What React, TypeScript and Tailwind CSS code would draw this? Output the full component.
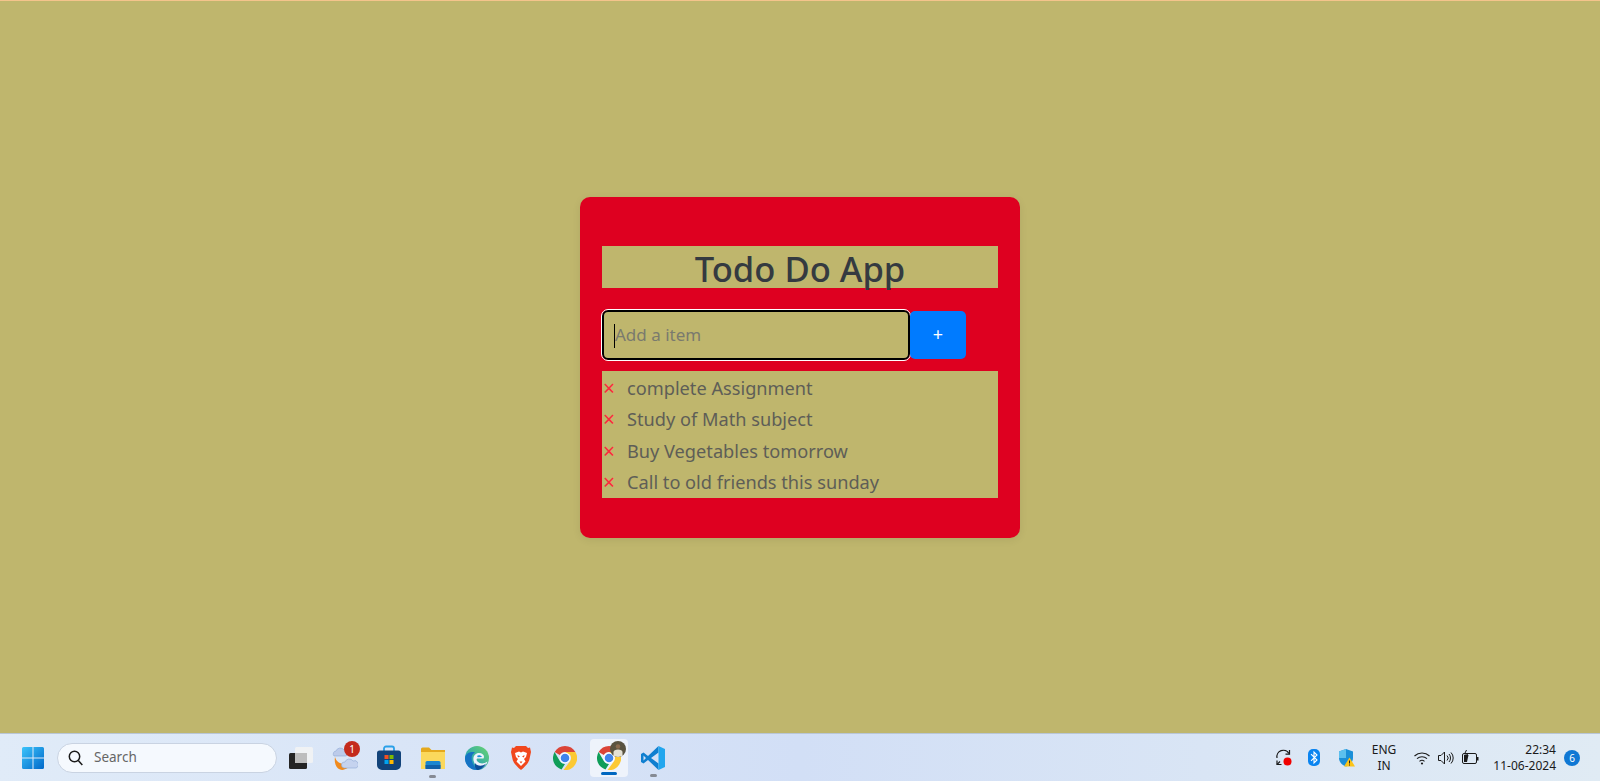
const todos = [
  "complete Assignment",
  "Study of Math subject",
  "Buy Vegetables tomorrow",
  "Call to old friends this sunday",
];

function WindowsLogo() {
  return (
    <svg width="24" height="24" viewBox="0 0 24 24">
      <defs>
        <linearGradient id="win" x1="0" y1="0" x2="1" y2="1">
          <stop offset="0" stopColor="#3cc4fb" />
          <stop offset="1" stopColor="#0068c9" />
        </linearGradient>
      </defs>
      <path fill="url(#win)" d="M1 2.500A1.500 1.500 0 0 1 2.500 1H11.500V11.500H1ZM12.500 1H21.500A1.500 1.500 0 0 1 23 2.500V11.500H12.500ZM1 12.500H11.500V23H2.500A1.500 1.500 0 0 1 1 21.500ZM12.500 12.500H23V21.500A1.500 1.500 0 0 1 21.500 23H12.500Z" />
    </svg>
  );
}

function TaskView() {
  return (
    <svg width="24" height="24" viewBox="0 0 24 24">
      <rect x="0" y="7" width="18" height="16" rx="1.500" fill="#242424" />
      <rect x="6" y="1" width="18" height="16" rx="1.500" fill="#f3f3f3" fillOpacity="0.85" />
      <rect x="6" y="7" width="12" height="10" fill="#bdbdbd" />
    </svg>
  );
}

function Widget() {
  return (
    <svg width="26" height="28" viewBox="0 0 26 28">
      <path d="M3 13C5 20 12 22 20 17C18 24 12 27 8 25.500C4 24 2 19 3 13Z" fill="#f08a1d" />
      <path d="M2 12A3 3 0 0 1 4 7A4.500 4.500 0 0 1 12 6A3 3 0 0 1 14 12Z" fill="#bccbea" stroke="#8fa7d4" strokeWidth=".6" />
      <path d="M12 24A3 3 0 0 1 13 18A4.500 4.500 0 0 1 21 17A3.500 3.500 0 0 1 24 24Z" fill="#c5d3ef" stroke="#8fa7d4" strokeWidth=".6" />
    </svg>
  );
}

function Store() {
  return (
    <svg width="24" height="26" viewBox="0 0 24 26">
      <path d="M7 6V3.500A2 2 0 0 1 9 1.500H15A2 2 0 0 1 17 3.500V6" fill="none" stroke="#2aa0e8" strokeWidth="1.800" />
      <path d="M0 8A2.500 2.500 0 0 1 2.500 5.500H21.500A2.500 2.500 0 0 1 24 8V20A5 5 0 0 1 19 25H5A5 5 0 0 1 0 20Z" fill="#12437a" />
      <rect x="7.500" y="10" width="4" height="4" fill="#f25022" />
      <rect x="12.500" y="10" width="4" height="4" fill="#7fba00" />
      <rect x="7.500" y="15" width="4" height="4" fill="#00a4ef" />
      <rect x="12.500" y="15" width="4" height="4" fill="#ffb900" />
    </svg>
  );
}

function Explorer() {
  return (
    <svg width="24" height="22" viewBox="0 0 24 22">
      <path d="M0 2A1.500 1.500 0 0 1 1.500 .5H8L10.500 3H24V8H0Z" fill="#e5a91d" />
      <path d="M0 5H24V22H0Z" fill="#fbd85c" />
      <rect x="4.500" y="14" width="15" height="8" rx="1.500" fill="#1a86d0" />
      <rect x="4.500" y="18" width="15" height="4" fill="#0f5fa8" />
    </svg>
  );
}

function Edge() {
  return (
    <svg width="24" height="24" viewBox="0 0 24 24">
      <defs>
        <linearGradient id="edgeTop" x1="0" y1="1" x2="1" y2="0">
          <stop offset="0" stopColor="#0f8fd6" />
          <stop offset="1" stopColor="#6bd66a" />
        </linearGradient>
      </defs>
      <circle cx="12" cy="12" r="12" fill="url(#edgeTop)" />
      <path d="M0 12C1 7 6 5 10 6.500C7 8 6 11 7 15C8 20 13 24 12 24C5 24 0 19 0 12Z" fill="#1573c4" />
      <path d="M9 16C7 11 10 7 14 7C18 7 20 10 18.500 12.500H13C11.500 12.500 11 14 12.500 15.500C15 18 19 18 22.500 15.500C21 20 17 23 13 22.500C11.500 22 10 19 9 16Z" fill="#eef3fb" />
      <path d="M12 10C13 9 16 9 17 11L12.800 11.300Z" fill="#1c90d8" />
      <path d="M10 17C12 20 17 21 21 17.500C19 21.500 15.500 24 12 24C10 22 9.500 20 10 17Z" fill="#0c4f9a" />
    </svg>
  );
}

function Brave() {
  return (
    <svg width="20" height="24" viewBox="0 0 20 24">
      <path d="M5 0H15L17 2L19 1.500L20 6L18.500 13C18 16 15 20 10 24C5 20 2 16 1.500 13L0 6L1 1.500L3 2Z" fill="#f1471d" />
      <path d="M4 7L8 5.500L10 6.500L12 5.500L16 7L15 11L13 13L14.500 15.500L10 20L5.500 15.500L7 13L5 11Z" fill="#fff" />
      <path d="M6.500 9L9 10.500L7 11.500ZM13.500 9L11 10.500L13 11.500ZM8.500 15.500H11.500L10 17.500Z" fill="#f1471d" />
    </svg>
  );
}

function Chrome() {
  return (
    <svg width="24" height="24" viewBox="0 0 24 24">
      <path d="M12 0A12 12 0 0 1 22.400 6H12A6 6 0 0 0 6.800 9L1.600 6A12 12 0 0 1 12 0Z" fill="#db4437" />
      <path d="M1.600 6L6.800 15A6 6 0 0 0 12 18L8.500 23.500A12 12 0 0 1 1.600 6Z" fill="#0f9d58" />
      <path d="M22.400 6A12 12 0 0 1 10.500 24L17.200 15A6 6 0 0 0 17.200 9L12 6Z" fill="#fcc934" />
      <circle cx="12" cy="12" r="5.400" fill="#fff" />
      <circle cx="12" cy="12" r="4.300" fill="#3f84ec" />
    </svg>
  );
}

function Avatar() {
  return (
    <svg width="16" height="16" viewBox="0 0 16 16">
      <circle cx="8" cy="8" r="8" fill="#5a5340" />
      <path d="M3.500 15V11C3.500 9.500 5.500 8.500 8 8.500S12.500 9.500 12.500 11V15L8 16Z" fill="#e4e0d2" />
      <circle cx="8" cy="5.500" r="2.300" fill="#8a6a4e" />
    </svg>
  );
}

function VsCode() {
  return (
    <svg width="24" height="24" viewBox="0 0 24 24">
      <path fillRule="evenodd" d="M17.500 0L7 10L2.500 6.500L0 8V16L2.500 17.500L7 14L17.500 24ZM17.500 6.500L10 12L17.500 17.500ZM2.500 9.500L5 12L2.500 14.500Z" fill="#0f7fd0" />
      <path d="M17.500 0L24 3V21L17.500 24Z" fill="#22a6ee" />
    </svg>
  );
}

function SyncIcon() {
  return (
    <svg width="18" height="18" viewBox="0 0 18 18" fill="none" stroke="#1a1a1a" strokeWidth="1.200">
      <path d="M2 9A6.500 6.500 0 0 1 14 4.500" />
      <path d="M14.500 1V5.200H10.500" />
      <path d="M2 11.500V15.500H6.500" />
      <path d="M2 15.500L5 12.500" />
      <circle cx="12.500" cy="12.500" r="4" fill="#f00000" stroke="none" />
    </svg>
  );
}

function BluetoothIcon() {
  return (
    <svg width="12" height="17" viewBox="0 0 12 17">
      <rect width="12" height="17" rx="5" fill="#0a84f0" />
      <path d="M3 5.200L9 11L6 14V3L9 6L3 11.800" fill="none" stroke="#fff" strokeWidth="1.100" />
    </svg>
  );
}

function ShieldIcon() {
  return (
    <svg width="16" height="18" viewBox="0 0 16 18">
      <path d="M7 0L14 2.500V9C14 13 11 16 7 17.500C3 16 0 13 0 9V2.500Z" fill="#1a8fd8" />
      <path d="M7 0V9H0V2.500Z" fill="#5cc0ee" />
      <path d="M10.500 8.500L16 17.500H5Z" fill="#fcc419" />
      <path d="M10.500 11.500V14.500M10.500 15.500V16.500" stroke="#222" strokeWidth="1" />
    </svg>
  );
}

function WifiIcon() {
  return (
    <svg width="16" height="14" viewBox="0 0 16 14" fill="none" stroke="#1a1a1a" strokeWidth="1.100">
      <path d="M.5 5A11 11 0 0 1 15.500 5" />
      <path d="M3 7.700A7.500 7.500 0 0 1 13 7.700" />
      <path d="M5.500 10.300A3.800 3.800 0 0 1 10.500 10.300" />
      <circle cx="8" cy="12.500" r="1.100" fill="#1a1a1a" stroke="none" />
    </svg>
  );
}

function SpeakerIcon() {
  return (
    <svg width="16" height="14" viewBox="0 0 16 14" fill="none" stroke="#1a1a1a" strokeWidth="1">
      <path d="M.5 4.500H3L6.500 1V13L3 9.500H.5Z" />
      <path d="M9 4.500A3.500 3.500 0 0 1 9 9.500" />
      <path d="M11 3A6 6 0 0 1 11 11" />
      <path d="M13 1.500A8 8 0 0 1 13 12.500" />
    </svg>
  );
}

function BatteryIcon() {
  return (
    <svg width="17" height="15" viewBox="0 0 17 15">
      <rect x=".5" y="3.500" width="14" height="10" rx="1.500" fill="none" stroke="#1a1a1a" />
      <path d="M2 5H6.500L5 12H2Z" fill="#1a1a1a" />
      <rect x="15" y="7" width="1.500" height="3.500" fill="#1a1a1a" />
      <path d="M4.500 0L2.500 4H5.500L3.500 8" fill="none" stroke="#1a1a1a" strokeWidth="1" />
    </svg>
  );
}

export default function App() {
  return (
    <div className="h-[781px] w-full flex flex-col bg-[#bfb66d] font-['Noto_Sans',sans-serif] overflow-hidden">
      <div className="h-px bg-[#f4c48c]"></div>

      {/* Todo card */}
      <div className="flex-1 flex items-center justify-center">
        <div className="w-[440px] h-[341px] bg-[#de0020] rounded-[10px] pt-[49px] px-[22px] shadow-[0_2px_8px_rgba(0,0,0,0.08)]">
          <h1 className="h-[42px] bg-[#bfb66d] text-center text-[34.6px] leading-[45px] font-medium text-[#343a40]">
            Todo Do App
          </h1>

          <div className="flex items-center mt-[22px]">
            <div className="relative">
              <input
                placeholder="Add a item"
                className="w-[308px] h-[50px] block rounded-[6px] border-2 border-black outline outline-white bg-[#bfb66d] pl-[11px] text-[17px] placeholder:text-[#7a7a6e] caret-transparent"
              />
              <span className="absolute left-[12px] top-[14px] h-[24px] w-px bg-black"></span>
            </div>
            <button className="relative w-[56px] h-[48px] bg-[#007bff] rounded-[5px] text-white text-[18px]">
              +
            </button>
          </div>

          <ul className="mt-[11px] h-[127px] bg-[#bfb66d] pt-[2.5px]">
            {todos.map((todo) => (
              <li key={todo} className="h-[31.3px] flex items-center text-[18.2px] text-[#5e5e57]">
                <span className="w-[25px] pl-[1px] text-[#fb2b3c] text-[21px] leading-none">×</span>
                {todo}
              </li>
            ))}
          </ul>
        </div>
      </div>

      {/* Taskbar */}
      <div className="h-[48px] flex items-center pl-[11px] pr-[20px] border-t border-[#b9c6d6] bg-gradient-to-r from-[#e0ebf8] via-[#d2dff6] to-[#e0ebf4]">
        <div className="w-[44px] flex justify-center"><WindowsLogo /></div>
        <div className="w-[220px] h-[30px] ml-[2px] flex items-center gap-[11px] pl-[10px] rounded-full bg-[#f5f9fe] border border-[#c9d3e2]">
          <svg width="15" height="16" viewBox="0 0 15 16" fill="none" stroke="#1a1a1a" strokeWidth="1.500">
            <circle cx="6.500" cy="6.500" r="5.200" />
            <path d="M10.300 10.500L14.300 15" />
          </svg>
          <span className="text-[13.5px] text-[#666666]">Search</span>
        </div>
        <div className="w-[44px] ml-[2px] flex justify-center"><TaskView /></div>
        <div className="relative w-[44px] flex justify-center">
          <Widget />
          <span className="absolute left-[21px] top-[-3px] w-[16px] h-[16px] rounded-full bg-[#c42b1c] text-white text-[10px] leading-[16px] text-center">1</span>
        </div>
        <div className="w-[44px] flex justify-center"><Store /></div>
        <div className="relative w-[44px] flex justify-center">
          <Explorer />
          <span className="absolute left-[18px] top-[28px] w-[7px] h-[3px] rounded-full bg-[#858a94]"></span>
        </div>
        <div className="w-[44px] flex justify-center"><Edge /></div>
        <div className="w-[44px] flex justify-center"><Brave /></div>
        <div className="w-[44px] flex justify-center"><Chrome /></div>
        <div className="relative w-[44px] flex justify-center">
          <div className="w-[38px] h-[38px] flex items-center justify-center rounded-[4px] bg-[#eef3fb]"><Chrome /></div>
          <span className="absolute left-[23px] top-[2px]"><Avatar /></span>
          <span className="absolute left-[14px] top-[33px] w-[16px] h-[3px] rounded-full bg-[#0067c0]"></span>
        </div>
        <div className="relative w-[44px] flex justify-center">
          <VsCode />
          <span className="absolute left-[19px] top-[28px] w-[7px] h-[3px] rounded-full bg-[#858a94]"></span>
        </div>

        {/* Tray */}
        <div className="ml-auto flex items-center text-[#1a1a1a]">
          <div className="w-[30px] flex justify-center"><SyncIcon /></div>
          <div className="w-[30px] flex justify-center"><BluetoothIcon /></div>
          <div className="w-[32px] ml-[2px] flex justify-center"><ShieldIcon /></div>
          <div className="w-[42px] text-center text-[12px] leading-[16px]">
            <div>ENG</div>
            <div>IN</div>
          </div>
          <div className="w-[24px] ml-[5px] flex justify-center"><WifiIcon /></div>
          <div className="w-[24px] flex justify-center"><SpeakerIcon /></div>
          <div className="w-[24px] flex justify-center"><BatteryIcon /></div>
          <div className="w-[74px] text-right text-[12px] leading-[16px]">
            <div>22:34</div>
            <div>11-06-2024</div>
          </div>
          <div className="w-[16px] h-[16px] ml-[8px] rounded-full bg-[#0f78d4] text-white text-[10px] leading-[16px] text-center">6</div>
        </div>
      </div>
    </div>
  );
}
